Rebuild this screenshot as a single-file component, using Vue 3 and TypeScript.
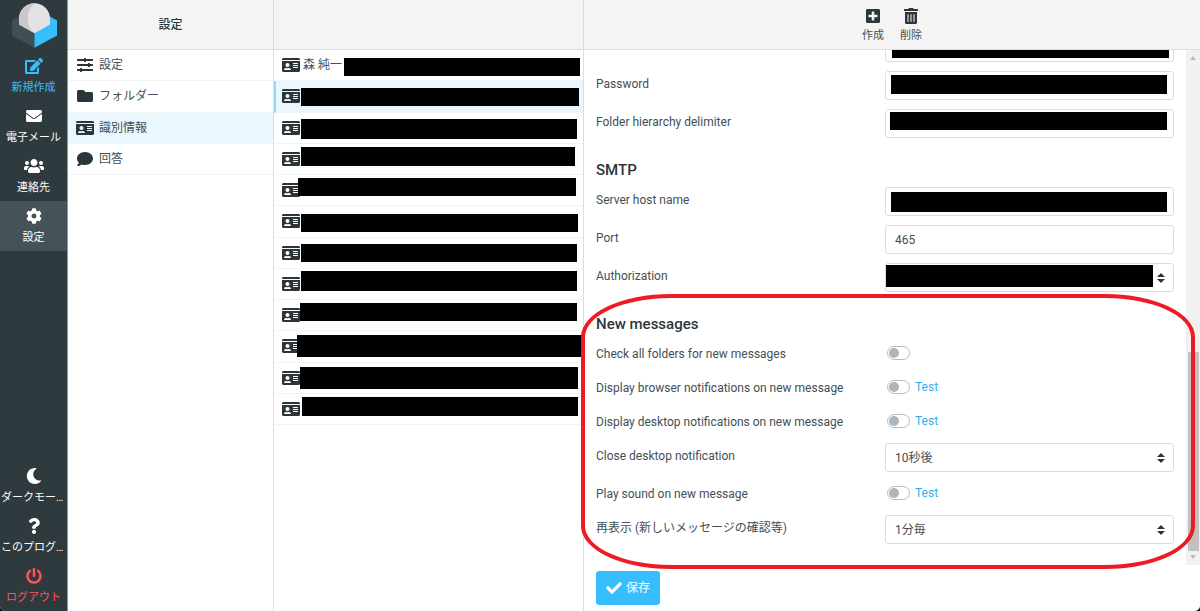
<script setup lang="ts">
import { ref } from 'vue'

interface Icon { box: string; d: string }
interface Task { id: string; label: string; icon: string; tone?: string }
interface Mask { left: number; right: number; top: number; height: number }
interface Identity extends Mask { name: string }
interface Field {
  id: string
  label: string
  kind: 'text' | 'select' | 'switch'
  value?: string
  test?: boolean
  mask?: Mask
}
interface Section { title: string; fields: Field[] }

const icons: Record<string, Icon> = {
  edit: { box: '0 0 576 512', d: 'M402.6 83.2l90.2 90.2c3.8 3.8 3.8 10 0 13.8L274.4 405.6l-92.8 10.3c-12.4 1.4-22.9-9.1-21.5-21.5l10.3-92.8L388.8 83.2c3.8-3.8 10-3.8 13.8 0zm162-22.9l-48.8-48.8c-15.2-15.2-39.9-15.2-55.2 0l-35.4 35.4c-3.8 3.8-3.8 10 0 13.8l90.2 90.2c3.8 3.8 10 3.8 13.8 0l35.4-35.4c15.2-15.3 15.2-40 0-55.2zM384 346.2V448H64V128h229.8c3.2 0 6.2-1.3 8.5-3.5l40-40c7.6-7.6 2.2-20.5-8.5-20.5H48C21.5 64 0 85.5 0 112v352c0 26.5 21.5 48 48 48h352c26.5 0 48-21.5 48-48V306.2c0-10.7-12.9-16-20.5-8.5l-40 40c-2.2 2.3-3.5 5.3-3.5 8.5z' },
  envelope: { box: '0 0 512 512', d: 'M502.3 190.8c3.9-3.1 9.7-.2 9.7 4.7V400c0 26.5-21.5 48-48 48H48c-26.5 0-48-21.5-48-48V195.6c0-5 5.7-7.8 9.7-4.7 22.4 17.4 52.1 39.5 154.1 113.6 21.1 15.4 56.7 47.8 92.2 47.6 35.7.3 72-32.8 92.3-47.6 102-74.1 131.6-96.3 154-113.7zM256 320c23.2.4 56.6-29.2 73.4-41.4 132.7-96.3 142.8-104.7 173.4-128.7 5.8-4.5 9.2-11.5 9.2-18.9v-19c0-26.5-21.5-48-48-48H48C21.5 64 0 85.5 0 112v19c0 7.4 3.4 14.3 9.2 18.9 30.6 23.9 40.7 32.4 173.4 128.7 16.8 12.2 50.2 41.8 73.4 41.4z' },
  users: { box: '0 0 640 512', d: 'M96 224c35.3 0 64-28.7 64-64s-28.7-64-64-64-64 28.7-64 64 28.7 64 64 64zm448 0c35.3 0 64-28.7 64-64s-28.7-64-64-64-64 28.7-64 64 28.7 64 64 64zm32 32h-64c-17.6 0-33.5 7.1-45.1 18.6 40.3 22.1 68.9 62 75.1 109.4h66c17.7 0 32-14.3 32-32v-32c0-35.3-28.7-64-64-64zm-256 0c61.9 0 112-50.1 112-112S381.9 32 320 32 208 82.1 208 144s50.1 112 112 112zm76.8 32h-8.3c-20.8 10-43.9 16-68.5 16s-47.6-6-68.5-16h-8.3C179.6 288 128 339.6 128 403.2V432c0 26.5 21.5 48 48 48h288c26.5 0 48-21.5 48-48v-28.8c0-63.6-51.6-115.2-115.2-115.2zm-223.7-13.4C161.5 263.1 145.6 256 128 256H64c-35.3 0-64 28.7-64 64v32c0 17.7 14.3 32 32 32h65.9c6.3-47.4 34.9-87.3 75.2-109.4z' },
  cog: { box: '0 0 512 512', d: 'M487.4 315.7l-42.6-24.6c4.3-23.2 4.3-47 0-70.2l42.6-24.6c4.9-2.8 7.1-8.6 5.5-14-11.1-35.6-30-67.8-54.7-94.6-3.8-4.1-10-5.1-14.8-2.3L380.8 110c-17.9-15.4-38.5-27.3-60.8-35.1V25.8c0-5.6-3.9-10.5-9.4-11.7-36.7-8.2-74.3-7.8-109.2 0-5.5 1.2-9.4 6.1-9.4 11.7V75c-22.2 7.9-42.8 19.8-60.8 35.1L88.7 85.5c-4.9-2.8-11-1.9-14.8 2.3-24.7 26.7-43.6 58.9-54.7 94.6-1.7 5.4.6 11.2 5.5 14L67.3 221c-4.3 23.2-4.3 47 0 70.2l-42.6 24.6c-4.9 2.8-7.1 8.6-5.5 14 11.1 35.6 30 67.8 54.7 94.6 3.8 4.1 10 5.1 14.8 2.3l42.6-24.6c17.9 15.4 38.5 27.3 60.8 35.1v49.2c0 5.6 3.9 10.5 9.4 11.7 36.7 8.2 74.3 7.8 109.2 0 5.5-1.2 9.4-6.1 9.4-11.7v-49.2c22.2-7.9 42.8-19.8 60.8-35.1l42.6 24.6c4.9 2.8 11 1.9 14.8-2.3 24.7-26.7 43.6-58.9 54.7-94.6 1.5-5.5-.7-11.3-5.6-14.1zM256 336c-44.1 0-80-35.9-80-80s35.9-80 80-80 80 35.9 80 80-35.9 80-80 80z' },
  moon: { box: '0 0 512 512', d: 'M283.211 512c78.962 0 151.079-35.925 198.857-94.792 7.068-8.708-.639-21.43-11.562-19.35-124.203 23.654-238.262-71.576-238.262-196.954 0-72.222 38.662-138.635 101.498-174.394 9.686-5.512 7.25-20.197-3.756-22.23A258.156 258.156 0 0 0 283.211 0c-141.309 0-256 114.511-256 256 0 141.309 114.511 256 256 256z' },
  question: { box: '0 0 384 512', d: 'M202.021 0C122.202 0 70.503 32.703 29.914 91.026c-7.363 10.58-5.093 25.086 5.178 32.874l43.138 32.709c10.373 7.865 25.132 6.026 33.253-4.148 25.049-31.381 43.63-49.449 82.757-49.449 30.764 0 68.816 19.799 68.816 49.631 0 22.552-18.617 34.134-48.993 51.164-35.423 19.86-82.299 44.576-82.299 106.405V320c0 13.255 10.745 24 24 24h72.471c13.255 0 24-10.745 24-24v-5.773c0-42.86 125.268-44.645 125.268-160.627C377.504 66.256 286.902 0 202.021 0zM192 373.459c-38.196 0-69.271 31.075-69.271 69.271 0 38.195 31.075 69.27 69.271 69.27s69.271-31.075 69.271-69.271-31.075-69.27-69.271-69.27z' },
  power: { box: '0 0 512 512', d: 'M400 54.1c63 45 104 118.6 104 201.9 0 136.8-110.8 247.7-247.5 248C120 504.3 8.2 393 8 256.4 7.9 173.1 48.9 99.3 111.8 54.2c11.7-8.3 28-4.8 35 7.7L162.6 90c5.9 10.5 3.1 23.8-6.6 31-41.5 30.8-68 79.6-68 134.9-.1 92.3 74.5 168.1 168 168.1 91.6 0 168.6-74.2 168-169.1-.3-51.8-24.7-101.8-68.1-134-9.7-7.2-12.4-20.5-6.5-30.9l15.8-28.1c7-12.4 23.2-16.1 34.8-7.8zM296 264V24c0-13.3-10.7-24-24-24h-32c-13.3 0-24 10.7-24 24v240c0 13.3 10.7 24 24 24h32c13.3 0 24-10.7 24-24z' },
  sliders: { box: '0 0 512 512', d: 'M496 384H160v-16c0-8.8-7.2-16-16-16h-32c-8.8 0-16 7.2-16 16v16H16c-8.8 0-16 7.2-16 16v32c0 8.8 7.2 16 16 16h80v16c0 8.8 7.2 16 16 16h32c8.8 0 16-7.2 16-16v-16h336c8.8 0 16-7.2 16-16v-32c0-8.8-7.2-16-16-16zm0-160h-80v-16c0-8.8-7.2-16-16-16h-32c-8.8 0-16 7.2-16 16v16H16c-8.8 0-16 7.2-16 16v32c0 8.8 7.2 16 16 16h336v16c0 8.8 7.2 16 16 16h32c8.8 0 16-7.2 16-16v-16h80c8.8 0 16-7.2 16-16v-32c0-8.8-7.2-16-16-16zm0-160H288V48c0-8.8-7.2-16-16-16h-32c-8.8 0-16 7.2-16 16v16H16C7.2 64 0 71.2 0 80v32c0 8.8 7.2 16 16 16h208v16c0 8.8 7.2 16 16 16h32c8.8 0 16-7.2 16-16v-16h208c8.8 0 16-7.2 16-16V80c0-8.8-7.2-16-16-16z' },
  folder: { box: '0 0 512 512', d: 'M464 128H272l-64-64H48C21.5 64 0 85.5 0 112v288c0 26.5 21.5 48 48 48h416c26.5 0 48-21.5 48-48V176c0-26.5-21.5-48-48-48z' },
  card: { box: '0 0 576 512', d: 'M528 32H48C21.5 32 0 53.5 0 80v16h576V80c0-26.5-21.5-48-48-48zM0 432c0 26.5 21.5 48 48 48h480c26.5 0 48-21.5 48-48V128H0v304zm352-232c0-4.4 3.6-8 8-8h144c4.4 0 8 3.6 8 8v16c0 4.4-3.6 8-8 8H360c-4.4 0-8-3.6-8-8v-16zm0 64c0-4.4 3.6-8 8-8h144c4.4 0 8 3.6 8 8v16c0 4.4-3.6 8-8 8H360c-4.4 0-8-3.6-8-8v-16zm0 64c0-4.4 3.6-8 8-8h144c4.4 0 8 3.6 8 8v16c0 4.4-3.6 8-8 8H360c-4.4 0-8-3.6-8-8v-16zM176 192c35.3 0 64 28.7 64 64s-28.7 64-64 64-64-28.7-64-64 28.7-64 64-64zM67.1 396.2C75.5 370.5 99.6 352 128 352h8.2c12.3 5.1 25.7 8 39.8 8s27.6-2.9 39.8-8h8.2c28.4 0 52.5 18.5 60.9 44.2 3.2 9.9-5.2 19.8-15.6 19.8H82.7c-10.4 0-18.8-10-15.6-19.8z' },
  comment: { box: '0 0 512 512', d: 'M256 32C114.6 32 0 125.1 0 240c0 49.6 21.4 95 57 130.7C44.5 421.1 2.7 466 2.2 466.5c-2.2 2.3-2.8 5.7-1.5 8.7S4.8 480 8 480c66.3 0 116-31.8 140.6-51.4 32.7 12.3 69 19.4 107.4 19.4 141.4 0 256-93.1 256-208S397.4 32 256 32z' },
  plus: { box: '0 0 448 512', d: 'M400 32H48C21.5 32 0 53.5 0 80v352c0 26.5 21.5 48 48 48h352c26.5 0 48-21.5 48-48V80c0-26.5-21.5-48-48-48zm-32 252c0 6.6-5.4 12-12 12h-92v92c0 6.6-5.4 12-12 12h-56c-6.6 0-12-5.4-12-12v-92H92c-6.6 0-12-5.4-12-12v-56c0-6.6 5.4-12 12-12h92v-92c0-6.6 5.4-12 12-12h56c6.6 0 12 5.4 12 12v92h92c6.6 0 12 5.4 12 12v56z' },
  trash: { box: '0 0 448 512', d: 'M32 464a48 48 0 0 0 48 48h288a48 48 0 0 0 48-48V128H32zm272-256a16 16 0 0 1 32 0v224a16 16 0 0 1-32 0zm-96 0a16 16 0 0 1 32 0v224a16 16 0 0 1-32 0zm-96 0a16 16 0 0 1 32 0v224a16 16 0 0 1-32 0zM432 32H312l-9.4-18.7A24 24 0 0 0 281.1 0H166.8a23.72 23.72 0 0 0-21.4 13.3L136 32H16A16 16 0 0 0 0 48v32a16 16 0 0 0 16 16h416a16 16 0 0 0 16-16V48a16 16 0 0 0-16-16z' },
  check: { box: '0 0 512 512', d: 'M173.898 439.404l-166.4-166.4c-9.997-9.997-9.997-26.206 0-36.204l36.203-36.204c9.997-9.998 26.207-9.998 36.204 0L192 312.69 432.095 72.596c9.997-9.997 26.207-9.997 36.204 0l36.203 36.204c9.997 9.997 9.997 26.206 0 36.204l-294.4 294.401c-9.998 9.997-26.207 9.997-36.204-.001z' },
}

const mainTasks: Task[] = [
  { id: 'compose', label: '新規作成', icon: 'edit', tone: 'accent' },
  { id: 'mail', label: '電子メール', icon: 'envelope' },
  { id: 'contacts', label: '連絡先', icon: 'users' },
  { id: 'settings', label: '設定', icon: 'cog', tone: 'current' },
]
const extraTasks: Task[] = [
  { id: 'dark', label: 'ダークモード', icon: 'moon' },
  { id: 'about', label: 'このプログラムについて', icon: 'question' },
  { id: 'logout', label: 'ログアウト', icon: 'power', tone: 'danger' },
]

const sections: Task[] = [
  { id: 'preferences', label: '設定', icon: 'sliders' },
  { id: 'folders', label: 'フォルダー', icon: 'folder' },
  { id: 'identities', label: '識別情報', icon: 'card' },
  { id: 'responses', label: '回答', icon: 'comment' },
]
const currentSection = ref('identities')

const identities: Identity[] = [
  { name: '森 純一', left: 68, right: 3, top: 8, height: 18 },
  { name: '', left: 25, right: 4, top: 7, height: 18 },
  { name: '', left: 25, right: 6, top: 6, height: 20 },
  { name: '', left: 25, right: 8, top: 3, height: 19 },
  { name: '', left: 22, right: 7, top: 3, height: 18 },
  { name: '', left: 25, right: 5, top: 8, height: 18 },
  { name: '', left: 25, right: 6, top: 6, height: 18 },
  { name: '', left: 25, right: 6, top: 2, height: 20 },
  { name: '', left: 24, right: 6, top: 3, height: 18 },
  { name: '', left: 21, right: 0, top: 4, height: 22 },
  { name: '', left: 24, right: 5, top: 4, height: 22 },
  { name: '', left: 26, right: 5, top: 3, height: 19 },
]
const currentIdentity = ref(1)

const form: Section[] = [
  {
    title: '',
    fields: [
      { id: 'username', label: 'Username', kind: 'text', mask: { left: 7, right: 5, top: 6, height: 19 } },
      { id: 'password', label: 'Password', kind: 'text', mask: { left: 6, right: 7, top: 4, height: 19 } },
      { id: 'delimiter', label: 'Folder hierarchy delimiter', kind: 'text', mask: { left: 5, right: 7, top: 3, height: 18 } },
    ],
  },
  {
    title: 'SMTP',
    fields: [
      { id: 'host', label: 'Server host name', kind: 'text', mask: { left: 6, right: 7, top: 5, height: 20 } },
      { id: 'port', label: 'Port', kind: 'text', value: '465' },
      { id: 'auth', label: 'Authorization', kind: 'select', value: '', mask: { left: 1, right: 21, top: 2, height: 22 } },
    ],
  },
  {
    title: 'New messages',
    fields: [
      { id: 'check-all', label: 'Check all folders for new messages', kind: 'switch' },
      { id: 'browser', label: 'Display browser notifications on new message', kind: 'switch', test: true },
      { id: 'desktop', label: 'Display desktop notifications on new message', kind: 'switch', test: true },
      { id: 'close', label: 'Close desktop notification', kind: 'select', value: '10秒後' },
      { id: 'sound', label: 'Play sound on new message', kind: 'switch', test: true },
      { id: 'refresh', label: '再表示 (新しいメッセージの確認等)', kind: 'select', value: '1分毎' },
    ],
  },
]

const place = (m: Mask) => ({
  left: `${m.left}px`,
  right: `${m.right}px`,
  top: `${m.top}px`,
  height: `${m.height}px`,
})
</script>

<template>
  <div class="app">
    <nav class="taskbar" aria-label="メニュー">
      <svg class="logo" viewBox="36 10 134 134" aria-hidden="true">
        <path d="M36 62L57 50L103 76V143L36 107z" fill="#404f54" />
        <path d="M170 62L149 50L103 76V143L170 107z" fill="#37beff" />
        <path d="M103 11A46 46 0 0 0 57 57V74L103 100L149 74V57A46 46 0 0 0 103 11z" fill="#e3e3e3" />
        <path d="M103 11A46 46 0 0 0 57 57V74L98 97A61 61 0 0 1 103 11z" fill="#c9c9c9" />
      </svg>
      <a v-for="t in mainTasks" :key="t.id" href="#" class="task" :class="t.tone">
        <svg class="glyph" :viewBox="icons[t.icon].box" aria-hidden="true"><path :d="icons[t.icon].d" /></svg>
        <span class="caption">{{ t.label }}</span>
      </a>
      <span class="spacer"></span>
      <a v-for="t in extraTasks" :key="t.id" href="#" class="task" :class="t.tone">
        <svg class="glyph" :viewBox="icons[t.icon].box" aria-hidden="true"><path :d="icons[t.icon].d" /></svg>
        <span class="caption">{{ t.label }}</span>
      </a>
    </nav>

    <section class="column sections">
      <header class="bar"><h1 class="title">設定</h1></header>
      <ul class="list list-sections">
        <li v-for="s in sections" :key="s.id" class="row" :class="{ chosen: s.id === currentSection }">
          <a href="#" class="entry" @click.prevent="currentSection = s.id">
            <svg class="row-icon" :viewBox="icons[s.icon].box" aria-hidden="true"><path :d="icons[s.icon].d" /></svg>
            <span>{{ s.label }}</span>
          </a>
        </li>
      </ul>
    </section>

    <section class="column identities">
      <header class="bar"></header>
      <ul class="list list-identities">
        <li
          v-for="(p, i) in identities"
          :key="i"
          class="row marked"
          :class="{ chosen: i === currentIdentity }"
        >
          <a href="#" class="entry tight" @click.prevent="currentIdentity = i">
            <svg class="row-icon" :viewBox="icons.card.box" aria-hidden="true"><path :d="icons.card.d" /></svg>
            <span>{{ p.name }}</span>
          </a>
          <span class="mask" :style="place(p)"></span>
        </li>
      </ul>
    </section>

    <main class="column details">
      <header class="bar tools">
        <button type="button" class="tool">
          <svg class="tool-icon" :viewBox="icons.plus.box" aria-hidden="true"><path :d="icons.plus.d" /></svg>
          <span>作成</span>
        </button>
        <button type="button" class="tool">
          <svg class="tool-icon" :viewBox="icons.trash.box" aria-hidden="true"><path :d="icons.trash.d" /></svg>
          <span>削除</span>
        </button>
      </header>

      <div class="viewport">
        <form class="form" @submit.prevent>
          <section v-for="g in form" :key="g.title" class="group">
            <h2 v-if="g.title" class="legend">{{ g.title }}</h2>
            <div v-for="f in g.fields" :key="f.id" class="field">
              <label class="label" :for="f.id">{{ f.label }}</label>
              <div v-if="f.kind === 'switch'" class="toggle">
                <input :id="f.id" type="checkbox" class="switch" />
                <a v-if="f.test" href="#" class="test">Test</a>
              </div>
              <div v-else class="control">
                <input v-if="f.kind === 'text'" :id="f.id" type="text" class="box" :value="f.value" />
                <template v-else>
                  <select :id="f.id" class="box">
                    <option>{{ f.value }}</option>
                  </select>
                  <svg class="caret" viewBox="0 0 4 5" aria-hidden="true"><path d="M2 0L0 2h4zm0 5L0 3h4z" /></svg>
                </template>
                <span v-if="f.mask" class="mask" :style="place(f.mask)"></span>
              </div>
            </div>
          </section>
        </form>
        <div class="scrollbar" aria-hidden="true">
          <svg class="arrow" viewBox="0 0 14 14"><path d="M4 10l3-4 3 4z" /></svg>
          <span class="thumb"></span>
          <svg class="arrow" viewBox="0 0 14 14"><path d="M4 4l3 4 3-4z" /></svg>
        </div>
      </div>

      <footer class="footer">
        <button type="button" class="save">
          <svg class="save-icon" :viewBox="icons.check.box" aria-hidden="true"><path :d="icons.check.d" /></svg>
          <span>保存</span>
        </button>
      </footer>
      <span class="highlight"></span>
    </main>
  </div>
</template>

<style>
body {
  margin: 0;
  background: #000;
}
</style>

<style scoped>
.app {
  display: grid;
  grid-template-columns: 68px 206px 310px minmax(0, 1fr);
  height: 100vh;
  overflow: hidden;
  border-radius: 0 0 5px 5px;
  background: #fff;
  color: #434f55;
  font: 12px/18px Roboto, "Noto Sans CJK JP", sans-serif;
}
.app *,
.app *::before {
  box-sizing: border-box;
}
a {
  color: inherit;
  text-decoration: none;
}
svg {
  fill: currentColor;
}

.taskbar {
  display: flex;
  flex-direction: column;
  border-right: 1px solid #8d979b;
  background: #2f3a3f;
  color: #fff;
}
.logo {
  flex: none;
  width: 45px;
  height: 45px;
  margin: 3px auto 3px 12px;
}
.task {
  display: flex;
  flex: none;
  flex-direction: column;
  align-items: center;
  height: 50px;
  padding-top: 7px;
}
.glyph {
  width: 20px;
  height: 16px;
}
.caption {
  max-width: 100%;
  padding: 0 1px;
  margin-top: 5px;
  overflow: hidden;
  font-size: 11px;
  line-height: 18px;
  text-overflow: ellipsis;
  white-space: nowrap;
}
.accent {
  color: #37beff;
}
.current {
  background: #455359;
}
.danger {
  color: #ff5552;
}
.spacer {
  flex: 1;
}

.column {
  display: flex;
  flex-direction: column;
  min-width: 0;
  min-height: 0;
}
.sections,
.identities {
  border-right: 1px solid #d9dee0;
}
.bar {
  display: flex;
  flex: none;
  align-items: center;
  justify-content: center;
  height: 50px;
  border-bottom: 1px solid #d9dee0;
  background: #f4f4f4;
}
.title {
  margin: 0;
  color: #2c363a;
  font-size: 12px;
  font-weight: 500;
}
.list {
  display: grid;
  grid-auto-rows: 1fr;
  margin: 0;
  padding: 0;
  list-style: none;
}
.list-sections {
  height: 125px;
}
.list-identities {
  height: 375px;
}
.row {
  position: relative;
  border-bottom: 1px solid #f1f3f4;
}
.chosen {
  background: #ebf7fe;
}
.marked {
  border-left: 2px solid transparent;
}
.marked.chosen {
  border-left-color: #8fdaff;
}
.entry {
  display: flex;
  align-items: center;
  gap: 5px;
  height: 100%;
  padding: 0 8px;
}
.tight {
  gap: 3px;
  padding: 0 6px;
}
.row-icon {
  width: 18px;
  height: 16px;
  color: #2c363a;
}
.mask {
  position: absolute;
  background: #000;
}

.details {
  position: relative;
}
.tools {
  gap: 16px;
}
.tool {
  display: flex;
  flex-direction: column;
  align-items: center;
  gap: 4px;
  padding: 2px 0 0;
  border: 0;
  background: none;
  color: #434f55;
  font: 11px/16px Roboto, "Noto Sans CJK JP", sans-serif;
}
.tool-icon {
  width: 16px;
  height: 16px;
  color: #2c363a;
}
.viewport {
  display: flex;
  flex: 1;
  min-height: 0;
}
.form {
  display: flex;
  flex: 1;
  flex-direction: column;
  justify-content: flex-end;
  min-width: 0;
  overflow: hidden;
  padding: 0 12px 12px;
}
.legend {
  margin: 0;
  padding: 12px 0 6px;
  color: #2c363a;
  font-size: 15px;
  font-weight: 500;
  line-height: 22px;
}
.field {
  display: grid;
  grid-template-columns: 1fr 1fr;
  align-items: start;
  padding-bottom: 7px;
}
.label {
  line-height: 27px;
}
.control {
  position: relative;
  padding-bottom: 2px;
}
.box {
  display: block;
  width: 100%;
  height: 29px;
  padding: 0 9px;
  border: 1px solid #d9dee3;
  border-radius: 3px;
  appearance: none;
  background: #fff;
  color: inherit;
  font: inherit;
}
.caret {
  position: absolute;
  top: 10px;
  right: 9px;
  width: 8px;
  height: 10px;
  color: #2c363a;
}
.toggle {
  display: flex;
  align-items: center;
  height: 24px;
  padding-left: 2px;
}
.switch {
  display: flex;
  align-items: center;
  width: 23px;
  height: 14px;
  margin: 0 5px 0 0;
  padding: 0 1px;
  border: 1px solid #b4bcc3;
  border-radius: 7px;
  appearance: none;
  background: #fff;
}
.switch::before {
  width: 10px;
  height: 10px;
  border-radius: 5px;
  background: #adb5bd;
  content: "";
}
.switch:checked {
  justify-content: flex-end;
}
.test {
  color: #2fb0f5;
}
.scrollbar {
  display: flex;
  flex: none;
  flex-direction: column;
  justify-content: space-between;
  width: 14px;
  background: #f1f1f1;
}
.arrow {
  width: 14px;
  height: 14px;
  color: #bbb;
}
.thumb {
  height: 199px;
  margin: auto 1px 0 2px;
  background: #c1c1c1;
}
.footer {
  flex: none;
  height: 46px;
  padding: 6px 12px;
}
.save {
  display: flex;
  align-items: center;
  gap: 4px;
  height: 34px;
  padding: 0 10px;
  border: 0;
  border-radius: 3px;
  background: #37beff;
  color: #fff;
  font: inherit;
}
.save-icon {
  width: 16px;
  height: 16px;
}
.highlight {
  position: absolute;
  right: 5px;
  bottom: 42px;
  left: -3px;
  height: 275px;
  border: 4px solid #ed1c24;
  border-radius: 90px / 43px;
  pointer-events: none;
}
</style>
